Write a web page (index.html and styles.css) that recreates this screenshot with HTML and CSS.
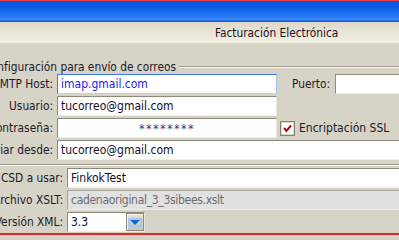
FILE: index.html
```html
<!DOCTYPE html>
<html lang="es">
<head>
<meta charset="utf-8">
<title>Facturación Electrónica</title>
<link rel="stylesheet" href="styles.css">
</head>
<body>
<div class="titlebar"></div>
<div class="tabbar"><span class="tab-title">Facturación Electrónica</span></div>
<div class="content">
  <div class="legend-row">
    <div class="legend-text"><span>Configuración para envío de correos</span></div>
    <div class="legend-line"></div>
  </div>
  <div class="group group-mail">
    <div class="row">
      <div class="label">SMTP Host:</div>
      <div class="field field-focus field-mid"><span class="val-blue">imap.gmail.com</span></div>
      <div class="label-inline">Puerto:</div>
      <div class="field field-port"></div>
    </div>
    <div class="row">
      <div class="label">Usuario:</div>
      <div class="field field-mid">tucorreo@gmail.com</div>
    </div>
    <div class="row">
      <div class="label">Contraseña:</div>
      <div class="field field-mid field-pass">********</div>
      <div class="check">
        <span class="check-box">
          <svg width="9" height="9" viewBox="0 0 9 9"><polyline points="1,4 3.5,7 8,1.5" fill="none" stroke="#c40018" stroke-width="2"/></svg>
        </span>
        <span class="check-label">Encriptación SSL</span>
      </div>
    </div>
    <div class="row">
      <div class="label">Enviar desde:</div>
      <div class="field field-wide">tucorreo@gmail.com</div>
    </div>
  </div>
  <div class="separator"></div>
  <div class="group group-cfdi">
    <div class="row">
      <div class="label">CSD a usar:</div>
      <div class="field field-wide">FinkokTest</div>
    </div>
    <div class="row">
      <div class="label">Archivo XSLT:</div>
      <div class="field field-wide field-disabled">cadenaoriginal_3_3sibees.xslt</div>
    </div>
    <div class="row">
      <div class="label">Versión XML:</div>
      <div class="field field-combo">
        <span class="combo-val">3.3</span>
        <span class="combo-btn"><span class="combo-arrow"></span></span>
      </div>
    </div>
  </div>
</div>
<div class="redline"></div>
</body>
</html>
```
FILE: styles.css
```css
html, body {
  margin: 0;
  padding: 0;
}
body {
  width: 399px;
  height: 235px;
  overflow: hidden;
  background: #d7d3c6;
  font-family: "DejaVu Sans Condensed", "DejaVu Sans", "Liberation Sans", sans-serif;
  font-size: 11.5px;
  color: #1c1a2c;
}
.titlebar {
  height: 21px;
  border-top: 1px solid #e8404a;
  background: linear-gradient(to bottom, #0a55e2 0%, #0c5ce8 30%, #2575f2 70%, #3a86f7 88%, #0a4fd6 100%);
}
.tabbar {
  height: 21px;
  background: linear-gradient(to bottom, #dcd8c9 0%, #e6e2d4 40%, #f3f0e3 100%);
  display: flex;
  align-items: center;
}
.tab-title {
  margin-left: 215px;
  color: #1e1028;
  font-size: 11.8px;
}
.content {
  display: flex;
  flex-direction: column;
}
.legend-row {
  margin-top: 17px;
  height: 14px;
  display: flex;
  align-items: center;
}
.legend-text {
  width: 176px;
  flex: none;
  display: flex;
  justify-content: flex-end;
  white-space: nowrap;
  font-size: 11.8px;
}
.legend-line {
  flex: 1;
  margin-left: 3px;
  height: 1px;
  background: #a19d90;
  border-bottom: 1px solid #fbfaf5;
}
.group {
  display: flex;
  flex-direction: column;
  gap: 2px;
}
.group-mail {
  margin-left: -40px;
}
.group-cfdi {
  margin-left: -30px;
  margin-top: 2px;
}
.row {
  display: flex;
  align-items: center;
  height: 20px;
}
.label {
  width: 93px;
  flex: none;
  text-align: right;
  white-space: nowrap;
  margin-right: 4px;
  font-size: 11.8px;
}
.field {
  box-sizing: border-box;
  height: 20px;
  flex: none;
  background: #ffffff;
  border: 1px solid;
  border-color: #8d897b #ece9dc #f1eee4 #8d897b;
  padding-left: 3px;
  display: flex;
  align-items: center;
  white-space: nowrap;
  color: #0e0e30;
  font-size: 12px;
}
.field-mid {
  width: 220px;
}
.field-focus {
  border-color: #3b7ae6 #9cc6f2 #b7d6f6 #3b7ae6;
}
.val-blue {
  color: #1a1af0;
}
.field-pass {
  justify-content: center;
  padding-left: 0;
  color: #3a3a70;
  font-size: 12.5px;
  letter-spacing: 1.4px;
}
.label-inline {
  margin-left: 15px;
  margin-right: 5px;
  white-space: nowrap;
  font-size: 11.8px;
}
.field-port {
  width: 100px;
}
.field-wide {
  width: 420px;
}
.field-disabled {
  background: #e2e1e2;
  color: #6c6c70;
  border-color: #a7a398 #ece9dc #f1eee4 #a7a398;
  letter-spacing: -0.3px;
}
.check {
  display: flex;
  align-items: center;
  margin-left: 3px;
}
.check-box {
  box-sizing: border-box;
  width: 15px;
  height: 15px;
  border: 1px solid #85816f;
  box-shadow: inset 0 0 0 1px #dcd8c6;
  background: #ffffff;
  display: flex;
  align-items: center;
  justify-content: center;
}
.check-label {
  margin-left: 4px;
  white-space: nowrap;
  font-size: 12px;
}
.separator {
  margin-top: 4px;
  height: 1px;
  background: #a19d90;
  border-bottom: 1px solid #fbfaf5;
}
.field-combo {
  width: 78px;
  padding-right: 0;
  justify-content: space-between;
}
.combo-btn {
  box-sizing: border-box;
  width: 18px;
  height: 18px;
  background: linear-gradient(to bottom, #e6e2d4, #c9c5b5);
  border: 1px solid #8e8a7a;
  box-shadow: inset 1px 1px 0 #f6f4ec;
  display: flex;
  align-items: center;
  justify-content: center;
}
.combo-arrow {
  width: 0;
  height: 0;
  border-left: 5px solid transparent;
  border-right: 5px solid transparent;
  border-top: 5px solid #1466e0;
  background: transparent;
  outline: 2px solid #a8c8f4;
  outline-offset: 0;
}
.redline {
  margin-top: 1px;
  height: 3px;
  background: #e3262a;
}
```
